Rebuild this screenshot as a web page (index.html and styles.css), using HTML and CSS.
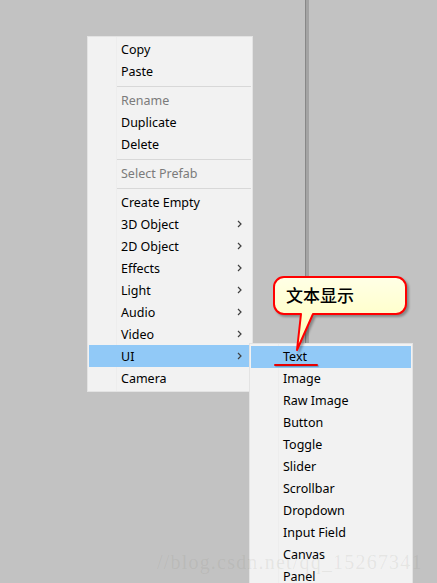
FILE: index.html
```html
<!DOCTYPE html>
<html>
<head>
<meta charset="utf-8">
<link rel="stylesheet" href="styles.css">
</head>
<body>
<div class="scene">
  <div class="splitter"></div>

  <div class="menu main-menu">
    <div class="item">Copy</div>
    <div class="item">Paste</div>
    <div class="sep"></div>
    <div class="item disabled">Rename</div>
    <div class="item">Duplicate</div>
    <div class="item">Delete</div>
    <div class="sep"></div>
    <div class="item disabled">Select Prefab</div>
    <div class="sep"></div>
    <div class="item">Create Empty</div>
    <div class="item">3D Object<svg class="chev" viewBox="0 0 5 8"><path d="M1 1 L4 4 L1 7"/></svg></div>
    <div class="item">2D Object<svg class="chev" viewBox="0 0 5 8"><path d="M1 1 L4 4 L1 7"/></svg></div>
    <div class="item">Effects<svg class="chev" viewBox="0 0 5 8"><path d="M1 1 L4 4 L1 7"/></svg></div>
    <div class="item">Light<svg class="chev" viewBox="0 0 5 8"><path d="M1 1 L4 4 L1 7"/></svg></div>
    <div class="item">Audio<svg class="chev" viewBox="0 0 5 8"><path d="M1 1 L4 4 L1 7"/></svg></div>
    <div class="item">Video<svg class="chev" viewBox="0 0 5 8"><path d="M1 1 L4 4 L1 7"/></svg></div>
    <div class="item active">UI<svg class="chev" viewBox="0 0 5 8"><path d="M1 1 L4 4 L1 7"/></svg></div>
    <div class="item">Camera</div>
  </div>

  <div class="menu sub-menu">
    <div class="item active">Text</div>
    <div class="item">Image</div>
    <div class="item">Raw Image</div>
    <div class="item">Button</div>
    <div class="item">Toggle</div>
    <div class="item">Slider</div>
    <div class="item">Scrollbar</div>
    <div class="item">Dropdown</div>
    <div class="item">Input Field</div>
    <div class="item">Canvas</div>
    <div class="item">Panel</div>
  </div>

  <div class="callout">
    <svg class="bubble" viewBox="0 0 140 80" width="140" height="80">
      <defs>
        <linearGradient id="fill" x1="0" y1="0" x2="0" y2="1">
          <stop offset="0" stop-color="#ffffe6"/>
          <stop offset="1" stop-color="#ffffb4"/>
        </linearGradient>
      </defs>
      <path d="M12 2 H124 A10 10 0 0 1 134 12 V29 A10 10 0 0 1 124 39 H41 L25 75 L29 39 H12 A10 10 0 0 1 2 29 V12 A10 10 0 0 1 12 2 Z" fill="url(#fill)" stroke="#ff0000" stroke-width="2" stroke-linejoin="round"/>
    </svg>
    <span class="callout-text">文本显示</span>
  </div>

  <div class="mark"></div>

  <div class="watermark">//blog.csdn.net/qq_15267341</div>
</div>
</body>
</html>
```

FILE: styles.css
```css
html, body {
  margin: 0;
  padding: 0;
}

body {
  background: #c2c2c2;
  font-family: "Noto Sans", "Open Sans", sans-serif;
}

.scene {
  position: relative;
  width: 437px;
  height: 583px;
  overflow: hidden;
  background: #c2c2c2;
}

.splitter {
  position: absolute;
  left: 305px;
  top: 0;
  width: 3px;
  height: 343px;
  border-left: 1px solid #878787;
  background: #a3a3a3;
}

.menu {
  position: absolute;
  box-sizing: border-box;
  background-color: #f2f2f2;
  border: 1px solid #e3e3e3;
  display: flex;
  flex-direction: column;
}

.main-menu {
  left: 87px;
  top: 36px;
  width: 166px;
  padding: 1px 1px 2px;
  background-image: linear-gradient(#ededed, #ededed);
  background-repeat: no-repeat;
  background-size: 1px 100%;
  background-position: 28px 0;
}

.sub-menu {
  left: 249px;
  top: 343px;
  width: 164px;
  height: 260px;
  padding: 2px 1px 1px;
  background-image: linear-gradient(#ededed, #ededed);
  background-repeat: no-repeat;
  background-size: 1px 100%;
  background-position: 28px 0;
}

.item {
  height: 22px;
  display: flex;
  align-items: center;
  justify-content: space-between;
  padding: 0 9px 0 32px;
  font-size: 12.5px;
  color: #000;
  white-space: nowrap;
}

.sub-menu .item {
  padding-bottom: 1px;
  box-sizing: border-box;
}

.item.disabled {
  color: #7b7b7b;
}

.item.active {
  background: #91c9f7;
}

.chev {
  width: 5px;
  height: 8px;
  fill: none;
  stroke: #404040;
  stroke-width: 1.2;
}

.sep {
  height: 1px;
  margin: 4px 0 2px 28px;
  background: #d8d8d8;
}

.callout {
  position: absolute;
  left: 272px;
  top: 275px;
  width: 140px;
  height: 80px;
}

.bubble {
  display: block;
  filter: drop-shadow(2px 2px 1px rgba(0, 0, 0, 0.3));
}

.callout-text {
  position: absolute;
  left: 14px;
  top: 10px;
  font-family: "Noto Sans CJK SC", sans-serif;
  font-size: 17px;
  line-height: 20px;
  font-weight: 500;
  color: #000;
}

.mark {
  position: absolute;
  left: 274px;
  top: 364px;
  width: 44px;
  height: 2px;
  border-radius: 1px;
  background: #e80000;
  box-shadow: 1px 1px 1px rgba(0, 0, 0, 0.25);
}

.watermark {
  position: absolute;
  left: 157px;
  top: 550px;
  font-family: "Liberation Serif", serif;
  font-size: 20px;
  line-height: 24px;
  letter-spacing: 1.2px;
  color: rgba(110, 110, 90, 0.1);
  white-space: nowrap;
}
```
